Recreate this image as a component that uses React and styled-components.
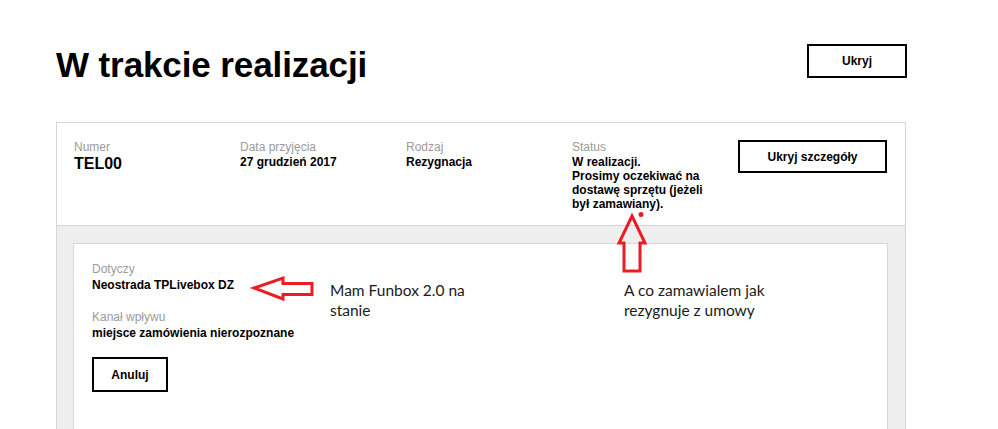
import React from "react";
import styled, { createGlobalStyle } from "styled-components";

const Global = createGlobalStyle`
  html, body { margin: 0; padding: 0; background: #ffffff; }
  body { font-family: "Liberation Sans", Arial, sans-serif; color: #000; }
  * { box-sizing: border-box; }
`;

const Page = styled.div`
  position: relative;
  width: 998px;
  min-height: 429px;
  padding: 44px 0 0 56px;
  overflow: hidden;
`;

const Container = styled.div`
  width: 850px;
`;

const TopRow = styled.div`
  display: flex;
  justify-content: space-between;
  align-items: flex-start;
`;

const Title = styled.h1`
  margin: 1px 0 0 0;
  font-size: 35px;
  line-height: 40px;
  font-weight: 700;
  letter-spacing: -0.1px;
`;

const OutlineButton = styled.button`
  display: inline-flex;
  align-items: center;
  justify-content: center;
  width: ${(p) => p.$w}px;
  height: ${(p) => p.$h}px;
  margin-right: ${(p) => p.$mr || 0}px;
  background: #fff;
  border: 2px solid #000;
  font-family: "Liberation Sans", Arial, sans-serif;
  font-weight: 700;
  font-size: 12px;
  color: #000;
  padding: 0;
  cursor: pointer;
`;

const Card = styled.div`
  margin-top: 37px;
  border: 1px solid #d6d6d6;
  border-bottom: none;
  background: #fff;
`;

const Header = styled.div`
  display: grid;
  grid-template-columns: 166px 166px 166px 166px 149px;
  padding: 17px 17px 13px 17px;
  border-bottom: 1px solid #d6d6d6;
  min-height: 103px;
`;

const Field = styled.div`
  display: flex;
  flex-direction: column;
`;

const Label = styled.div`
  font-size: 12px;
  line-height: 14px;
  color: #9b9b9b;
  margin-bottom: ${(p) => p.$gap ?? 2}px;
`;

const Value = styled.div`
  font-size: ${(p) => (p.$big ? 16 : 12)}px;
  line-height: ${(p) => (p.$big ? 18 : 14)}px;
  font-weight: 700;
  max-width: ${(p) => (p.$narrow ? "142px" : "none")};
`;

const Gray = styled.div`
  background: #eeeeee;
  padding: 17px 17px 0 16px;
  min-height: 204px;
`;

const Inner = styled.div`
  background: #fff;
  border: 1px solid #d8d8d8;
  border-bottom: none;
  padding: 18px 18px 40px 18px;
  min-height: 190px;
  display: flex;
  flex-direction: column;
  align-items: flex-start;
`;

const Spacer = styled.div`
  height: ${(p) => p.$h}px;
`;

const Note = styled.div`
  position: absolute;
  left: ${(p) => p.$x}px;
  top: ${(p) => p.$y}px;
  font-family: Lato, "Open Sans", sans-serif;
  font-size: 15.5px;
  line-height: 20px;
  color: #1a1a1a;
  white-space: nowrap;
`;

const Overlay = styled.svg`
  position: absolute;
  left: 0;
  top: 0;
  pointer-events: none;
`;

export default function App() {
  return (
    <>
      <Global />
      <Page>
        <Container>
          <TopRow>
            <Title>W trakcie realizacji</Title>
            <OutlineButton $w={100} $h={34} $mr={-1}>Ukryj</OutlineButton>
          </TopRow>
          <Card>
            <Header>
              <Field>
                <Label $gap={1}>Numer</Label>
                <Value $big>TEL00</Value>
              </Field>
              <Field>
                <Label $gap={1}>Data przyjęcia</Label>
                <Value>27 grudzień 2017</Value>
              </Field>
              <Field>
                <Label $gap={1}>Rodzaj</Label>
                <Value>Rezygnacja</Value>
              </Field>
              <Field>
                <Label $gap={1}>Status</Label>
                <Value $narrow>
                  W realizacji.
                  <br />
                  Prosimy oczekiwać na dostawę sprzętu (jeżeli był zamawiany).
                </Value>
              </Field>
              <div>
                <OutlineButton $w={149} $h={33}>Ukryj szczegóły</OutlineButton>
              </div>
            </Header>
            <Gray>
              <Inner>
                <Label>Dotyczy</Label>
                <Value>Neostrada TPLivebox DZ</Value>
                <Spacer $h={18} />
                <Label>Kanał wpływu</Label>
                <Value>miejsce zamówienia nierozpoznane</Value>
                <Spacer $h={17} />
                <OutlineButton $w={76} $h={35}>Anuluj</OutlineButton>
              </Inner>
            </Gray>
          </Card>
        </Container>

        <Overlay width="998" height="429" viewBox="0 0 998 429">
          <polygon
            points="254,288 283,278 283,283.5 312,283.5 312,294.5 283,294.5 283,299"
            fill="#fff"
            stroke="#ed1c24"
            strokeWidth="3"
            strokeLinejoin="miter"
          />
          <polygon
            points="632,216 645,243 640,243 640,271 624,271 624,243 619,243"
            fill="none"
            stroke="#ed1c24"
            strokeWidth="3"
            strokeLinejoin="miter"
          />
          <circle cx="641" cy="214.5" r="2.5" fill="#ed1c24" />
        </Overlay>

        <Note $x={330} $y={280}>
          Mam Funbox 2.0 na
          <br />
          stanie
        </Note>
        <Note $x={624} $y={280}>
          A co zamawialem jak
          <br />
          rezygnuje z umowy
        </Note>
      </Page>
    </>
  );
}
